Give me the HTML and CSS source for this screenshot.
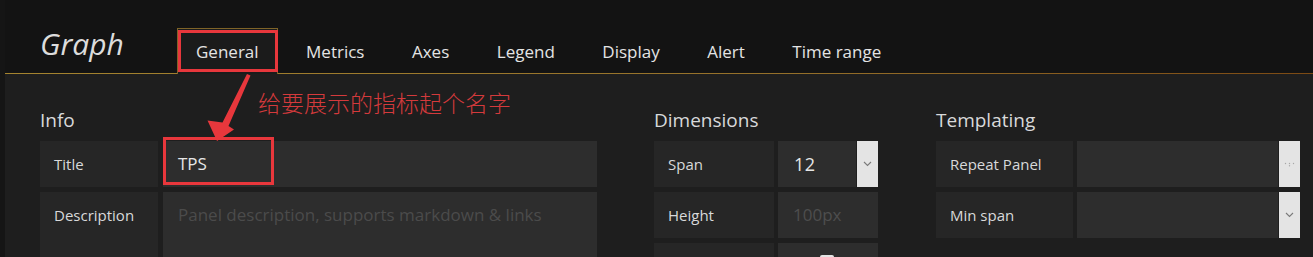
FILE: index.html
```html
<!DOCTYPE html>
<html lang="zh-CN">
<head>
<meta charset="utf-8">
<title>Graph</title>
<link rel="stylesheet" href="styles.css">
</head>
<body>
<div class="page">
  <header class="header">
    <div class="title">Graph</div>
    <nav class="tabs">
      <span class="tab active">General</span>
      <span class="tab">Metrics</span>
      <span class="tab">Axes</span>
      <span class="tab">Legend</span>
      <span class="tab">Display</span>
      <span class="tab">Alert</span>
      <span class="tab">Time range</span>
    </nav>
  </header>
  <main class="content">
    <section class="sec sec-info">
      <h2 class="sec-title">Info</h2>
      <div class="row"><div class="lbl">Title</div><div class="field">TPS</div></div>
      <div class="row row-tall"><div class="lbl">Description</div><div class="field placeholder">Panel description, supports markdown &amp; links</div></div>
    </section>
    <section class="sec sec-dim">
      <h2 class="sec-title">Dimensions</h2>
      <div class="row"><div class="lbl">Span</div><div class="field select"><span class="val val-span">12</span><span class="btn"><svg width="9" height="6" viewBox="0 0 9 6"><path d="M1 1l3.5 3.5L8 1" fill="none" stroke="#7a7a7a" stroke-width="1.1"/></svg></span></div></div>
      <div class="row"><div class="lbl">Height</div><div class="field placeholder ph-height">100px</div></div>
      <div class="row"><div class="lbl"></div><div class="field check-cell"><span class="check"></span></div></div>
    </section>
    <section class="sec sec-tpl">
      <h2 class="sec-title">Templating</h2>
      <div class="row"><div class="lbl">Repeat Panel</div><div class="field select"><span class="val"></span><span class="btn"><svg width="11" height="5" viewBox="0 0 11 5"><circle cx="1.5" cy="1.5" r="0.7" fill="#a8a8a8"/><circle cx="5.5" cy="1.5" r="0.7" fill="#a8a8a8"/><circle cx="9.5" cy="1.5" r="0.7" fill="#a8a8a8"/><circle cx="5.5" cy="3.8" r="0.7" fill="#a8a8a8"/></svg></span></div></div>
      <div class="row"><div class="lbl">Min span</div><div class="field select"><span class="val"></span><span class="btn"><svg width="9" height="6" viewBox="0 0 9 6"><path d="M1 1l3.5 3.5L8 1" fill="none" stroke="#7a7a7a" stroke-width="1.1"/></svg></span></div></div>
    </section>
  </main>

  <div class="mark mark-tab"></div>
  <div class="mark mark-title"></div>
  <svg class="arrow" width="300" height="160" viewBox="0 0 300 160">
    <polygon points="247,74 250.5,75.5 228.5,126 234,129.5 217,141 207.5,120.5 222.5,122.5" fill="#e8373c"/>
  </svg>
  <div class="note">给要展示的指标起个名字</div>
</div>
</body>
</html>
```

FILE: styles.css
```css
html, body {
  margin: 0;
  padding: 0;
  background: #151515;
}

body {
  width: 1313px;
  height: 257px;
  overflow: hidden;
  font-family: "Open Sans", "Noto Sans", sans-serif;
}

.page {
  position: relative;
  height: 257px;
  padding-left: 5px;
  overflow: hidden;
}

/* header */
.header {
  display: flex;
  align-items: flex-end;
  height: 74px;
  background: linear-gradient(90deg, #a5842f 0%, #95702a 60%, #7c4a14 100%) left bottom / 100% 1px no-repeat, #131313;
}

.title {
  align-self: flex-start;
  margin-left: 35px;
  width: 137px;
  padding-top: 24px;
  font-size: 30px;
  line-height: 40px;
  font-style: italic;
  color: #dcdcdc;
}

.tabs {
  display: flex;
  align-items: flex-end;
  gap: 9.5px;
}

.tab {
  box-sizing: border-box;
  height: 46px;
  padding: 1px 18px 0;
  border: 1px solid transparent;
  border-bottom: 0;
  font-size: 17px;
  line-height: 44px;
  color: #e4e4e4;
  white-space: nowrap;
}

.tab.active {
  border-color: #7f6428;
  background: #1b1b1b;
}

/* content */
.content {
  display: grid;
  grid-template-columns: 557px 225px 362px;
  column-gap: 57px;
  height: 183px;
  padding: 33px 0 0 35px;
  background: #1e1e1e;
}

.sec-title {
  margin: 0 0 8px;
  font-size: 19px;
  line-height: 26px;
  font-weight: 400;
  color: #d8d9da;
}

.row {
  display: grid;
  height: 46px;
  margin-bottom: 5px;
}

.row-tall {
  height: 80px;
}

.sec-info .row {
  grid-template-columns: 118px 434px;
  column-gap: 5px;
}

.sec-dim .row {
  grid-template-columns: 120px 100px;
  column-gap: 4px;
}

.sec-tpl .row {
  grid-template-columns: 137px 223px;
  column-gap: 4px;
}

.lbl {
  background: #262626;
  padding-left: 14px;
  font-size: 15px;
  line-height: 46px;
  color: #d8d9da;
  white-space: nowrap;
}

.field {
  background: #2d2d2d;
  padding-left: 15px;
  font-size: 17px;
  line-height: 46px;
  color: #e6e6e6;
  white-space: nowrap;
  overflow: hidden;
}

.placeholder {
  color: #4b4b4b;
}

.ph-height {
  color: #4e4e4e;
}

.select {
  display: flex;
  padding-left: 0;
}

.val {
  flex: 1;
}

.val-span {
  padding-left: 16px;
  font-size: 18px;
  letter-spacing: 0.5px;
}

.btn {
  display: flex;
  align-items: center;
  justify-content: center;
  width: 21px;
  background: #e4e4e4;
  border-left: 1px solid #1f1f1f;
}

.check-cell {
  padding-left: 42px;
}

.check {
  display: block;
  width: 14px;
  height: 14px;
  margin-top: 12px;
  background: #e4e4e4;
  border-radius: 2px;
}

/* annotation overlay */
.mark {
  position: absolute;
  box-sizing: border-box;
  border: 3px solid #e8373c;
}

.mark-tab {
  left: 178px;
  top: 30px;
  width: 100px;
  height: 42px;
}

.mark-title {
  left: 163px;
  top: 137px;
  width: 111px;
  height: 48px;
}

.arrow {
  position: absolute;
  left: 0;
  top: 0;
}

.note {
  position: absolute;
  left: 258px;
  top: 88px;
  font-family: "Noto Sans CJK SC", sans-serif;
  font-size: 23px;
  line-height: 28px;
  font-weight: 300;
  color: #d43a3c;
  white-space: nowrap;
}
```
